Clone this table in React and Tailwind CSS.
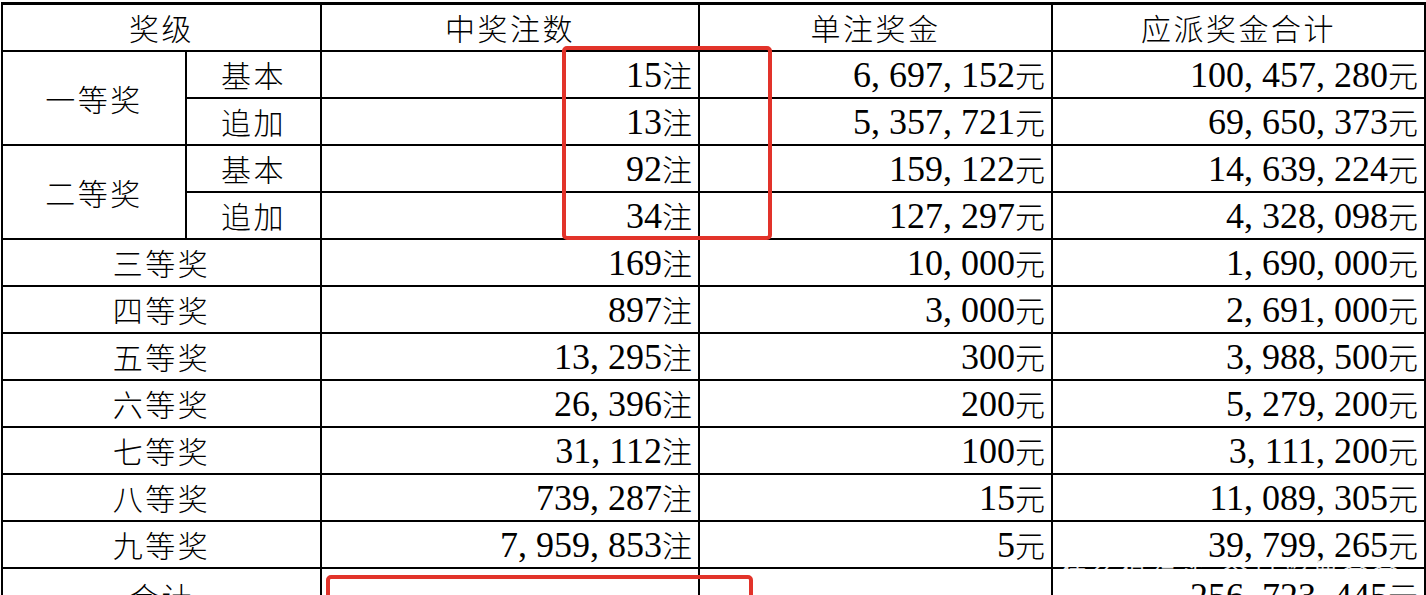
import React from 'react';

const cjk = "font-['Noto_Sans_CJK_SC',sans-serif] text-[30px] tracking-[2.5px] font-light";
const num = "font-['Liberation_Serif','Noto_Sans_CJK_SC',serif] text-[36px]";

const rows = [
  { group: '一等奖', sub: '基本', count: '15', price: '6,697,152', total: '100,457,280' },
  { sub: '追加', count: '13', price: '5,357,721', total: '69,650,373' },
  { group: '二等奖', sub: '基本', count: '92', price: '159,122', total: '14,639,224' },
  { sub: '追加', count: '34', price: '127,297', total: '4,328,098' },
  { name: '三等奖', count: '169', price: '10,000', total: '1,690,000' },
  { name: '四等奖', count: '897', price: '3,000', total: '2,691,000' },
  { name: '五等奖', count: '13,295', price: '300', total: '3,988,500' },
  { name: '六等奖', count: '26,396', price: '200', total: '5,279,200' },
  { name: '七等奖', count: '31,112', price: '100', total: '3,111,200' },
  { name: '八等奖', count: '739,287', price: '15', total: '11,089,305' },
  { name: '九等奖', count: '7,959,853', price: '5', total: '39,799,265' },
];

// 数字 + 单位，逗号按等宽半角处理
function Num({ v, unit }) {
  const parts = v.split(',');
  return (
    <span className="whitespace-nowrap leading-none">
      {parts.map((p, i) => (
        <React.Fragment key={i}>
          {i > 0 && <span className={`${num} inline-block w-[18px] text-left`}>,</span>}
          <span className={num}>{p}</span>
        </React.Fragment>
      ))}
      {unit && <span className={`${cjk} tracking-normal`}>{unit}</span>}
    </span>
  );
}

const cell = 'border-2 border-black p-0 align-middle';
const numCell = `${cell} text-right pr-[6px]`;

export default function App() {
  return (
    <div className="relative w-[1426px] h-[595px] overflow-hidden bg-white text-black">
      <div className="pt-[2px] pl-[1px]">
        <table className="table-fixed border-collapse w-[1423px]">
          <colgroup>
            <col className="w-[184px]" />
            <col className="w-[135px]" />
            <col className="w-[378px]" />
            <col className="w-[353px]" />
            <col className="w-[373px]" />
          </colgroup>
          <thead>
            <tr className="h-[46px]">
              <th colSpan={2} className={`${cell} border-t-[3px] font-normal`}><span className={cjk}>奖级</span></th>
              <th className={`${cell} border-t-[3px] font-normal`}><span className={cjk}>中奖注数</span></th>
              <th className={`${cell} border-t-[3px] font-normal`}><span className={cjk}>单注奖金</span></th>
              <th className={`${cell} border-t-[3px] font-normal`}><span className={cjk}>应派奖金合计</span></th>
            </tr>
          </thead>
          <tbody>
            {rows.map((r, i) => (
              <tr key={i} className="h-[46.5px]">
                {r.group && (
                  <td rowSpan={2} className={`${cell} text-center`}><span className={cjk}>{r.group}</span></td>
                )}
                {r.sub && <td className={`${cell} text-center`}><span className={cjk}>{r.sub}</span></td>}
                {r.name && (
                  <td colSpan={2} className={`${cell} text-center`}><span className={cjk}>{r.name}</span></td>
                )}
                <td className={numCell}><Num v={r.count} unit="注" /></td>
                <td className={numCell}><Num v={r.price} unit="元" /></td>
                <td className={numCell}><Num v={r.total} unit="元" /></td>
              </tr>
            ))}
            <tr className="h-[47px]">
              <td colSpan={2} className={`${cell} text-center`}><span className={cjk}>合计</span></td>
              <td className={numCell}><span className={num}>–––</span></td>
              <td className={numCell}><span className={num}>–––</span></td>
              <td className={numCell}><Num v="256,723,445" unit="元" /></td>
            </tr>
          </tbody>
        </table>
      </div>

      {/* 红框标注 */}
      <div className="absolute left-[562px] top-[46px] w-[210px] h-[194px] rounded-[5px] border-4 border-[#e2332a]" />
      <div className="absolute left-[326px] top-[575px] w-[427px] h-[60px] rounded-[5px] border-4 border-[#e2332a]" />

      {/* 水印 */}
      <div className="absolute left-[1062px] top-[552px] text-white/90 text-[24px] tracking-[6px] font-['Noto_Sans_CJK_SC',sans-serif] whitespace-nowrap">
        什么值得买 今日彩票合合
      </div>
    </div>
  );
}
